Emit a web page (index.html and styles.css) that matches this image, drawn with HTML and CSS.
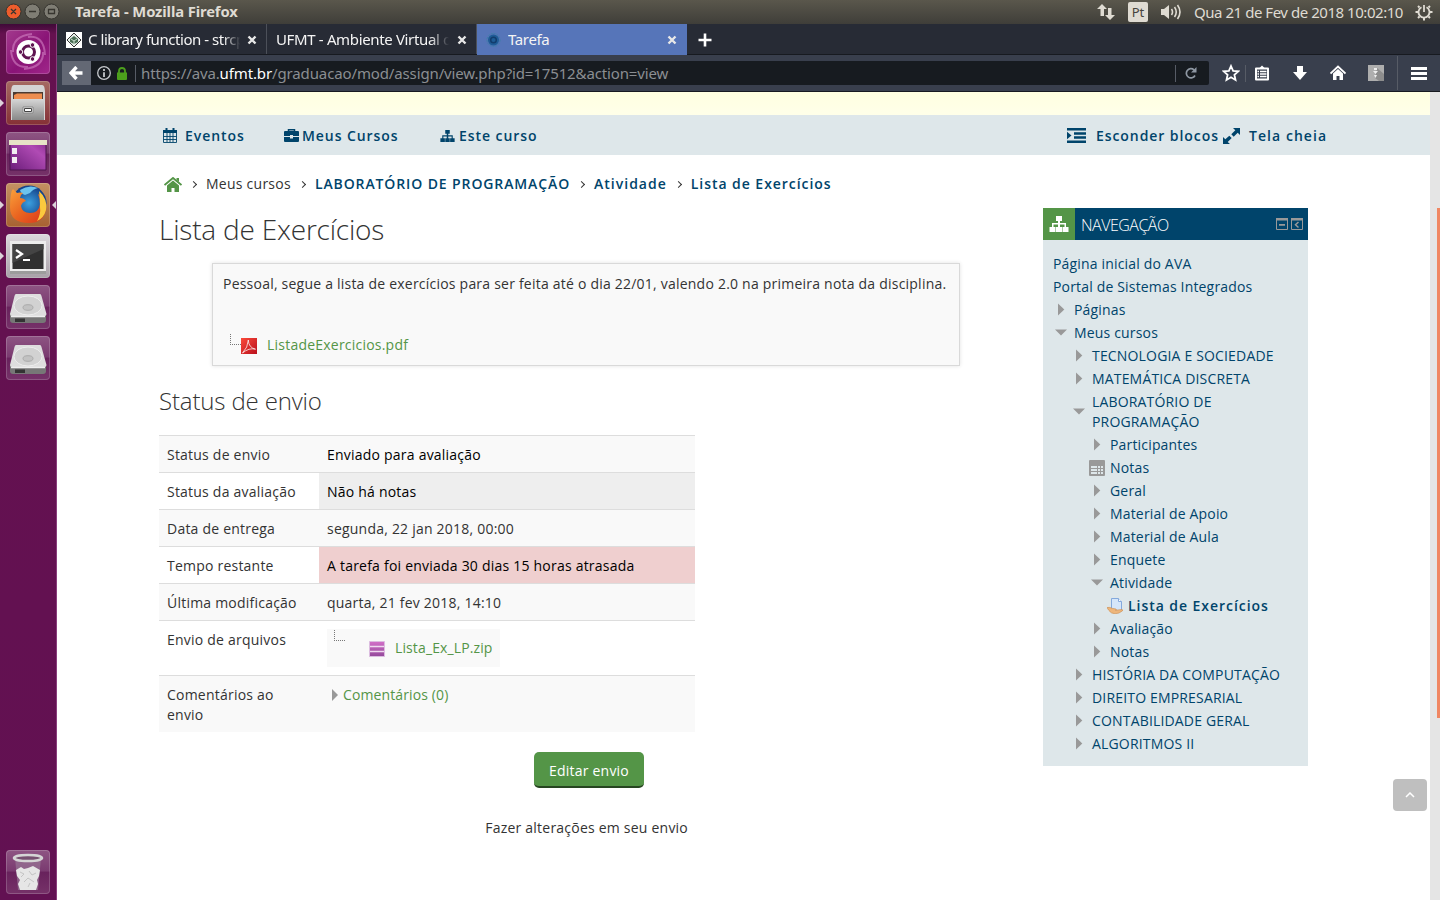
FILE: index.html
```html
<!DOCTYPE html>
<html lang="pt-BR">
<head>
<meta charset="utf-8">
<title>Tarefa</title>
<link rel="stylesheet" href="styles.css">
</head>
<body>
<svg class="defs" width="0" height="0" aria-hidden="true">
  <defs>
    <linearGradient id="gSteel" x1="0" y1="0" x2="0" y2="1"><stop offset="0" stop-color="#d6d6d6"/><stop offset="1" stop-color="#888"/></linearGradient>
    <linearGradient id="gPurple" x1="0" y1="1" x2="1" y2="0"><stop offset="0" stop-color="#6b1d7a"/><stop offset=".7" stop-color="#b04bb4"/><stop offset="1" stop-color="#8a2b90"/></linearGradient>
    <linearGradient id="gPdf" x1="0" y1="0" x2="1" y2="1"><stop offset="0" stop-color="#fb4a3a"/><stop offset="1" stop-color="#b90f1c"/></linearGradient>
    <linearGradient id="gZip" x1="0" y1="0" x2="0" y2="1"><stop offset="0" stop-color="#d36fc8"/><stop offset="1" stop-color="#94499b"/></linearGradient>
    <linearGradient id="gFox" x1="0" y1="0" x2="1" y2="1"><stop offset="0" stop-color="#f9a13b"/><stop offset=".5" stop-color="#ea6420"/><stop offset="1" stop-color="#d8361c"/></linearGradient>
    <radialGradient id="gGlobe"><stop offset="0" stop-color="#3aa0e0"/><stop offset="1" stop-color="#143f86"/></radialGradient>
    <symbol id="right" viewBox="0 0 16 16"><path d="M5 1.500l6.300 6L5 13.500z" fill="#999"/></symbol>
    <symbol id="down" viewBox="0 0 16 16"><path d="M2 4.500h12l-6 6z" fill="#999"/></symbol>
    <symbol id="sitemap" viewBox="0 0 20 16"><path d="M7 0h6v5h-2v2h6v4h2.500v5h-6v-5h2V8.500H11V11h2v5H7v-5h2V8.500H4.500V11h2v5h-6v-5H3V7h6V5H7z" fill="currentColor"/></symbol>
    <symbol id="disk" viewBox="0 0 44 44"><path d="M4 28h36v7q0 3-3 3H7q-3 0-3-3z" fill="#777"/><path d="M10 9h24q1 0 1.500 2L40.500 29q0 2-2 2H6q-2 0-2-2L8.500 11q.5-2 1.500-2z" fill="#dedede"/><ellipse cx="22" cy="20.500" rx="14" ry="9.500" fill="#d2d2d2" stroke="#ededed"/><ellipse cx="22" cy="22.500" rx="5" ry="2.800" fill="#c2c2c2" stroke="#aaa"/><path d="M5 31.500h34" stroke="#eee" stroke-width="1.500"/><path d="M9 33.500h10V37H9z" fill="#333"/></symbol>
    <symbol id="close" viewBox="0 0 10 10"><path d="M1.500 1.500l7 7M8.500 1.500l-7 7" stroke="currentColor" stroke-width="2.400"/></symbol>
  </defs>
</svg>

<header class="panel">
  <div class="wm">
    <svg width="60" height="24" viewBox="0 0 60 24"><g stroke="#35332e"><circle cx="13.500" cy="11.500" r="7.500" fill="#ee5d2c"/><circle cx="32.500" cy="11.500" r="7.500" fill="#7f7d74"/><circle cx="51.500" cy="11.500" r="7.500" fill="#7f7d74"/></g><g fill="none" stroke="#37352f" stroke-width="1.300"><path d="M11 9l5 5M16 9l-5 5M29 11.500h7M48.500 9.500h6v4h-6z"/></g></svg>
    <b class="wm-title">Tarefa - Mozilla Firefox</b>
  </div>
  <div class="tray">
    <svg class="t-net" width="18" height="18" viewBox="0 0 18 18"><path d="M0 6l5-5 5 5H7v7H3.500V6zM8 12h3V5h3.500v7H18l-5 5z" fill="#dfdbd2"/></svg>
    <span class="kbd">Pt</span>
    <svg class="t-vol" width="21" height="18" viewBox="0 0 21 18"><path d="M0 6h3l5-4v14l-5-4H0z" fill="#dfdbd2"/><path d="M10.500 6q2 3 0 6M13.500 4q3.500 5 0 10M16.500 2q5 7 0 14" fill="none" stroke="#dfdbd2" stroke-width="1.600"/></svg>
    <span class="clock">Qua 21 de Fev de 2018 10:02:10</span>
    <svg width="18" height="18" viewBox="0 0 18 18"><path d="M6.500 4.200a5.500 5.500 0 1 0 5 0M9 2v7" fill="none" stroke="#dfdbd2" stroke-width="1.800"/><path d="M3 3l1.500 1.500M13.500 4.500L15 3M.5 9H3M15 9h2.500M3 15l1.500-1.500M13.500 13.500L15 15M9 15v2.500" stroke="#dfdbd2" stroke-width="2"/></svg>
  </div>
</header>

<div class="desktop">
  <aside class="launcher">
    <div class="tile dash"><svg viewBox="0 0 44 44"><path d="M7 22Q6 6 26 4M22 7q16-2 17 18M37 22q1 15-19 17M22 37Q6 38 5 20" fill="none" stroke="#d98acb" stroke-opacity=".55" stroke-width="2"/><circle cx="22.500" cy="22" r="12" fill="#fff"/><circle cx="22.500" cy="22" r="6" fill="none" stroke="#5e1350" stroke-width="3"/><g fill="#5e1350" stroke="#fff"><circle cx="14.500" cy="22" r="2.300"/><circle cx="26.500" cy="15" r="2.300"/><circle cx="26.500" cy="29" r="2.300"/></g></svg></div>
    <div class="tile files run"><svg viewBox="0 0 44 44"><path d="M8 4h28q2 0 2.500 3l.5 3v29H5V10l.5-3Q6 4 8 4z" fill="#d4d4d4"/><path d="M7 11h30v8H7z" fill="#4b3a32"/><path d="M8 14l3-1.500h25V18H8z" fill="#ed8d4f"/><path d="M6 18h32v21H6z" fill="url(#gSteel)"/><path d="M17 26h10v6H17z" fill="#eee" stroke="#888"/><path d="M18.500 27.500h7v3h-7z" fill="#fff" stroke="#444"/></svg></div>
    <div class="tile desk"><svg viewBox="0 0 44 44"><path d="M4 9h36v29H4z" fill="url(#gPurple)" stroke="#4d124d"/><path d="M3 8h38v5H3z" fill="#e7e3c7"/><path d="M6 16h5v6H6zM6 25h5v6H6z" fill="#f3eef3"/></svg></div>
    <div class="tile fox run active"><svg viewBox="0 0 44 44"><circle cx="23" cy="20" r="17.500" fill="url(#gGlobe)"/><path d="M14 7q9-6 18-2-5 1-8 5l-5 2q-4-1-5-5z" fill="#6cc4ee"/><path d="M5 11q0-3 2-5l4 4q3-1 6 0-3 2-3 5 4 0 6 3-4 1-5 5 1 7 9 7 9 0 10-9 0-6-2-10 9 5 8 15-2 14-17 14Q4 40 4 24q0-8 1-13z" fill="url(#gFox)"/><path d="M33 8q9 8 7 19-2 8-9 11 4-7 3-14 0-9-1-16z" fill="#fbc93e"/></svg></div>
    <div class="tile term run"><svg viewBox="0 0 44 44"><path d="M4 7h36v33H4z" fill="#9c9c9c"/><path d="M4 7h36v30H4z" fill="#ececec"/><path d="M6.500 10h31v25h-31z" fill="#303030"/><path d="M6.500 10h31v5l-31 14z" fill="#444"/><path d="M10 16l6 4-6 4M17 26h7" fill="none" stroke="#fff" stroke-width="2.200"/></svg></div>
    <div class="tile"><svg><use href="#disk"/></svg></div>
    <div class="tile"><svg><use href="#disk"/></svg></div>
    <div class="tile trash"><svg viewBox="0 0 44 44"><path d="M9 8h26l-3 32H12z" fill="#9a7a98" fill-opacity=".65"/><path d="M10 20l5-3 3 2 4-1 5-2 7 4-1 6-2 4 1 4-2 6H14l-2-6 2-4-3-4z" fill="#e6e6e6"/><path d="M14 22l4 2-3 3M23 21l3 4 4-2M18 32l4-4 6 4M22 37l2-4" fill="none" stroke="#c4c4c4"/><ellipse cx="22" cy="8" rx="14" ry="3" fill="#76506f" stroke="#d5d5d5" stroke-width="2.500"/></svg></div>
  </aside>

  <div class="browser">
    <div class="tabs">
      <div class="tab t1">
        <svg width="16" height="16" viewBox="0 0 16 16"><path d="M0 0h16v16H0z" fill="#fff"/><path d="M8 1l7 7-7 7-7-7z" fill="#e7eee8" stroke="#333"/><path d="M8 4l4 3v3l-4 2-4-2V7z" fill="#4b6e55"/><path d="M5 7l3 2 3-2M8 9v3" fill="none" stroke="#cde0d2"/></svg>
        <span class="tt">C library function - strcpy</span><svg class="x"><use href="#close"/></svg>
      </div>
      <div class="tab t2"><span class="tt">UFMT - Ambiente Virtual de</span><svg class="x"><use href="#close"/></svg></div>
      <div class="tab t3">
        <svg width="16" height="16" viewBox="0 0 16 16"><circle cx="7.500" cy="8" r="5.500" fill="#1f5c96"/><circle cx="7.500" cy="8" r="6.500" fill="none" stroke="#3d7fa8" stroke-dasharray="2 1"/><circle cx="7.500" cy="8" r="2.800" fill="none" stroke="#123d6e" stroke-width="1.500"/></svg>
        <span class="tt">Tarefa</span><svg class="x"><use href="#close"/></svg>
      </div>
      <svg class="plus" width="14" height="14" viewBox="0 0 14 14"><path d="M7 .5v13M.5 7h13" stroke="#fff" stroke-width="2.600"/></svg>
    </div>
    <div class="toolbar">
      <div class="back"><svg width="14" height="14" viewBox="0 0 14 14"><path d="M7.500 1L2 7l5.500 6M2.500 7H13.500" fill="none" stroke="#fff" stroke-width="3.400"/></svg></div>
      <div class="url">
        <svg width="14" height="14" viewBox="0 0 14 14"><circle cx="7" cy="7" r="6.300" fill="none" stroke="#c5c8cc" stroke-width="1.300"/><path d="M7 3v2M7 6.200V11" stroke="#c5c8cc" stroke-width="1.800"/></svg>
        <svg class="lock" width="10" height="13" viewBox="0 0 10 13"><path d="M2 6V4q0-3 3-3t3 3v2" fill="none" stroke="#4c9f1c" stroke-width="1.800"/><path d="M0 5.500h10V12q0 1-1 1H1q-1 0-1-1z" fill="#4c9f1c"/></svg>
        <i class="vsep"></i>
        <span class="addr">https://ava.<em>ufmt.br</em>/graduacao/mod/assign/view.php?id=17512&amp;action=view</span>
        <i class="vsep end"></i>
        <svg class="reload" width="12" height="12" viewBox="0 0 12 12"><path d="M10 8.500A4.600 4.600 0 1 1 9 2.800" fill="none" stroke="#8f98a3" stroke-width="1.700"/><path d="M11.500 0v5.500H6z" fill="#8f98a3"/></svg>
      </div>
      <div class="tools">
        <svg width="18" height="18" viewBox="0 0 18 18"><path d="M9 2l2.100 4.800 5.200.5-3.900 3.500 1.100 5.100L9 13.200l-4.500 2.700 1.100-5.100-3.900-3.500 5.200-.5z" fill="none" stroke="#fff" stroke-width="1.800"/></svg>
        <i class="vsep"></i>
        <svg width="16" height="16" viewBox="0 0 16 16"><path d="M5 3.500L8 .5l3 3z" fill="#fff"/><path d="M2 3.500h12v11H2z" fill="none" stroke="#fff" stroke-width="2" stroke-linejoin="round"/><path d="M3.500 6.500H5M6 6.500h6.500M3.500 9H5M6 9h6.500M3.500 11.500H5M6 11.500h6.500" stroke="#fff" stroke-width="1.400"/></svg>
        <svg width="16" height="16" viewBox="0 0 16 16"><path d="M5 1h6v6h4l-7 8-7-8h4z" fill="#fff"/></svg>
        <svg width="16" height="16" viewBox="0 0 16 16"><path d="M.5 8.500L8 1.500l7.500 7" fill="none" stroke="#fff" stroke-width="1.800"/><path d="M3 8.500L8 4l5 4.500V15H9.500v-4h-3v4H3z" fill="#fff"/></svg>
        <svg width="16" height="16" viewBox="0 0 16 16"><path d="M0 0h16v16H0z" fill="#aeaeae"/><path d="M9 3l7 6v7h-5l-4-3z" fill="#8d8d8d"/><path d="M6 3h3v2H6zM5 6h5L7.500 9zM6 10h3l-1.500 3z" fill="#eee"/></svg>
        <i class="vsep tall"></i>
        <svg width="16" height="13" viewBox="0 0 16 13"><path d="M0 1.500h16M0 6.500h16M0 11.500h16" stroke="#fff" stroke-width="2.800"/></svg>
      </div>
    </div>

    <div class="view">
      <div class="page">
        <div class="notice"></div>
        <nav class="menu">
          <a class="m1"><svg width="14" height="15" viewBox="0 0 14 15"><path d="M.5 2.500h13v12H.5zM.5 8.500h13M.5 11.500h13M4 5v9M7 5v9M10 5v9" fill="none" stroke="currentColor" stroke-width=".9"/><path d="M0 2h14v3H0zM2.500 0h2v4h-2zM9.500 0h2v4h-2z" fill="currentColor"/></svg><span>Eventos</span></a>
          <a class="m2"><svg width="15" height="13" viewBox="0 0 15 13"><path d="M4.500 2.500V.8h6v1.700" fill="none" stroke="currentColor" stroke-width="1.500"/><path d="M1 2h13q1 0 1 1v4H9V6H6v1H0V3q0-1 1-1zM0 8h6v1.500h3V8h6v4q0 1-1 1H1q-1 0-1-1z" fill="currentColor"/></svg><span>Meus Cursos</span></a>
          <a class="m3"><svg width="15" height="12"><use href="#sitemap"/></svg><span>Este curso</span></a>
          <a class="m4"><svg width="19" height="15" viewBox="0 0 19 15"><path d="M0 1.300h19M7 5.500h12M7 9.500h12M0 13.700h19" stroke="currentColor" stroke-width="2.500"/><path d="M0 3.800l4.500 3.700L0 11.200z" fill="currentColor"/></svg><span>Esconder blocos</span></a>
          <a class="m5"><svg width="17" height="16" viewBox="0 0 17 16"><path d="M10 0h7v7l-2.300-2.300-4 4-2.400-2.400 4-4zM0 9l2.300 2.300 4-3.500L8.700 10l-4 4L7 16H0z" fill="currentColor"/></svg><span>Tela cheia</span></a>
        </nav>
        <div class="crumbs">
          <svg width="18" height="15" viewBox="0 0 18 15"><path d="M.5 8L9 1l8.500 7" fill="none" stroke="#549547" stroke-width="1.900"/><path d="M3 8.500l6-5 6 5V15h-4.500v-4h-3v4H3zM12.500 1H15v4l-2.500-2z" fill="#549547"/></svg>
          <i class="chev"></i><span>Meus cursos</span><i class="chev"></i><b class="b1">LABORATÓRIO DE PROGRAMAÇÃO</b><i class="chev"></i><b class="b2">Atividade</b><i class="chev"></i><b class="b3">Lista de Exercícios</b>
        </div>
        <div class="cols">
          <main>
            <h1>Lista de Exercícios</h1>
            <section class="intro">
              <p>Pessoal, segue a lista de exercícios para ser feita até o dia 22/01, valendo 2.0 na primeira nota da disciplina.</p>
              <div class="file"><i class="elbow"></i><svg width="16" height="16" viewBox="0 0 16 16"><path d="M0 0h16v16H0z" fill="url(#gPdf)"/><path d="M1.500 15Q7 9.500 7.300 2q.2 7.500 7.200 9.200Q8 9.500 1.500 15z" fill="none" stroke="#fff" stroke-opacity=".8" stroke-width=".9"/></svg><a>ListadeExercicios.pdf</a></div>
            </section>
            <h2>Status de envio</h2>
            <div class="table">
              <div class="row odd"><div>Status de envio</div><div class="black">Enviado para avaliação</div></div>
              <div class="row"><div>Status da avaliação</div><div class="black grey">Não há notas</div></div>
              <div class="row odd"><div>Data de entrega</div><div>segunda, 22 jan 2018, 00:00</div></div>
              <div class="row"><div>Tempo restante</div><div class="black late">A tarefa foi enviada 30 dias 15 horas atrasada</div></div>
              <div class="row odd"><div>Última modificação</div><div>quarta, 21 fev 2018, 14:10</div></div>
              <div class="row"><div>Envio de arquivos</div><div class="filecell"><div class="zip"><i class="elbow"></i><svg width="16" height="16" viewBox="0 0 16 16"><path d="M.5.500h15v15H.5z" fill="url(#gZip)" stroke="#dcbde0"/><path d="M1 5.500h14M1 10.500h14" stroke="#f0d9f0" stroke-width="1.400"/></svg><a>Lista_Ex_LP.zip</a></div></div></div>
              <div class="row odd"><div>Comentários ao<br>envio</div><div class="comments"><svg width="16" height="20" viewBox="0 -2 16 20"><path d="M5 2l6 6-6 6z" fill="#999"/></svg><a>Comentários (0)</a></div></div>
            </div>
            <div class="actions"><button>Editar envio</button><p>Fazer alterações em seu envio</p></div>
          </main>
          <aside class="block">
            <div class="bhead"><span class="bicon"><svg width="20" height="16"><use href="#sitemap"/></svg></span><h3>NAVEGAÇÃO</h3><svg width="27" height="12" viewBox="0 0 27 12"><path d="M.5 1h11v10.500H.5zM15.500 1h11v10.500h-11z" fill="none" stroke="#999"/><path d="M0 0h12v2.500H0zM15 0h12v2.500H15zM3 6h6v1.800H3z" fill="#999"/><path d="M22.500 4l-3 2.800 3 2.700" fill="none" stroke="#999" stroke-width="1.500"/></svg></div>
            <ul>
              <li>Página inicial do AVA</li><li>Portal de Sistemas Integrados</li>
              <li><svg><use href="#right"/></svg><span>Páginas</span></li>
              <li><svg><use href="#down"/></svg><span>Meus cursos</span></li>
              <li class="l2"><svg><use href="#right"/></svg><span>TECNOLOGIA E SOCIEDADE</span></li>
              <li class="l2"><svg><use href="#right"/></svg><span>MATEMÁTICA DISCRETA</span></li>
              <li class="l2"><svg><use href="#down"/></svg><span>LABORATÓRIO DE<br>PROGRAMAÇÃO</span></li>
              <li class="l3"><svg><use href="#right"/></svg><span>Participantes</span></li>
              <li class="l3"><svg viewBox="0 0 16 16"><rect width="16" height="16" rx="1" fill="#999"/><path d="M2 6h6v2H2zM9 6h2v2H9zM12 6h2v2h-2zM2 9h6v2H2zM9 9h2v2H9zM12 9h2v2h-2zM2 12h6v2H2zM9 12h2v2H9zM12 12h2v2h-2z" fill="#dee7ea"/></svg><span>Notas</span></li>
              <li class="l3"><svg><use href="#right"/></svg><span>Geral</span></li>
              <li class="l3"><svg><use href="#right"/></svg><span>Material de Apoio</span></li>
              <li class="l3"><svg><use href="#right"/></svg><span>Material de Aula</span></li>
              <li class="l3"><svg><use href="#right"/></svg><span>Enquete</span></li>
              <li class="l3"><svg><use href="#down"/></svg><span>Atividade</span></li>
              <li class="l4"><svg viewBox="0 0 16 16"><path d="M4.500.5h7l3 3v9h-10z" fill="#d5e6fa" stroke="#84a9dc"/><path d="M11.500.5v3h3" fill="#fff" stroke="#84a9dc"/><path d="M0 9.500q3-.5 5 .8l4 .7q1 .8-.5 1.200l6.500-.7q1.500.3.300 1.500Q12 15.800 8 15.800T1.500 12z" fill="#eeb67b" stroke="#c98d53" stroke-width=".6"/></svg><b class="b3">Lista de Exercícios</b></li>
              <li class="l3"><svg><use href="#right"/></svg><span>Avaliação</span></li>
              <li class="l3"><svg><use href="#right"/></svg><span>Notas</span></li>
              <li class="l2"><svg><use href="#right"/></svg><span>HISTÓRIA DA COMPUTAÇÃO</span></li>
              <li class="l2"><svg><use href="#right"/></svg><span>DIREITO EMPRESARIAL</span></li>
              <li class="l2"><svg><use href="#right"/></svg><span>CONTABILIDADE GERAL</span></li>
              <li class="l2"><svg><use href="#right"/></svg><span>ALGORITMOS II</span></li>
            </ul>
          </aside>
        </div>
        <a class="top"><svg width="10" height="6" viewBox="0 0 10 6"><path d="M1 5l4-4 4 4" fill="none" stroke="#fff" stroke-width="1.500"/></svg></a>
      </div>
      <div class="scroll"><div class="thumb"></div></div>
    </div>
  </div>
</div>
</body>
</html>
```
FILE: styles.css
```css
* { box-sizing: border-box; }
body { margin: 0; width: 1440px; height: 900px; overflow: hidden; display: flex; flex-direction: column; font: 14px/20px "Open Sans", sans-serif; color: #333; background: #fff; }
h1, h2, h3, p, ul { margin: 0; padding: 0; }
svg { flex: none; display: block; }
.defs { position: absolute; }

/* system panel */
.panel { height: 24px; flex: none; display: flex; justify-content: space-between; background: linear-gradient(#5a574c, #3f3e39); color: #dfdbd2; font-family: "Noto Sans", sans-serif; font-size: 15px; line-height: 23px; }
.wm { display: flex; }
.wm-title { margin-left: 15px; letter-spacing: -.12px; font-size: 14.800px; }
.tray { display: flex; align-items: center; padding-right: 7px; white-space: nowrap; }
.kbd { width: 20px; height: 20px; margin: 0 13px 0 13px; background: #dfdbd2; color: #45433d; border-radius: 2px; font-size: 13px; line-height: 20px; text-align: center; }
.clock { margin: 0 12px 0 12px; width: 209px; letter-spacing: -.46px; }

.desktop { flex: 1; display: flex; min-height: 0; }

/* launcher */
.launcher { width: 57px; flex: none; padding: 6px 0 6px 6px; display: flex; flex-direction: column; gap: 7px; background: linear-gradient(#3f0a38, #65114f 10px, #621152); border-right: 1px solid #8a3d7c; }
.tile { position: relative; width: 44px; height: 44px; flex: none; border-radius: 4px; background: linear-gradient(#8e5583, #7a3a70 48%, #68225c 50%, #763269); box-shadow: inset 0 0 0 1px rgba(255,255,255,.18); }
.tile svg { width: 44px; height: 44px; }
.dash { background: linear-gradient(135deg, #a33a8d, #8a1477 55%, #a1268b); }
.files { background: linear-gradient(#a56a62, #853036); }
.fox { background: linear-gradient(#c49163, #a76231); }
.term { background: linear-gradient(#dcd8dc, #a8a1a8); }
.run::before { content: ""; position: absolute; left: -6px; top: 18px; border: 4px solid transparent; border-left-color: #dcd3da; border-right: 0; }
.active::after { content: ""; position: absolute; right: -6px; top: 18px; border: 4px solid transparent; border-right-color: #dcd3da; border-left: 0; }
.trash { margin-top: auto; }

/* browser */
.browser { flex: 1; display: flex; flex-direction: column; min-width: 0; }
.tabs { height: 31px; flex: none; display: flex; align-items: center; background: #272b35; border-bottom: 1px solid #171a20; color: #f4f4f4; font-family: "Noto Sans", sans-serif; font-size: 15px; }
.tab { height: 30px; display: flex; align-items: center; padding: 2px 9px 0; border-right: 1px solid #4c5059; }
.tt { flex: 1; overflow: hidden; white-space: nowrap; letter-spacing: -.35px; line-height: 22px; padding-bottom: 2px; }
.t1 .tt { letter-spacing: -.45px; }
.t1 .tt, .t2 .tt { -webkit-mask-image: linear-gradient(90deg, #000 88%, transparent 99%); mask-image: linear-gradient(90deg, #000 88%, transparent 99%); }
.t1 { width: 210px; } .t1 .tt { margin: 0 5px 0 6px; }
.t2 { width: 210px; } .t2 .tt { margin-right: 6px; }
.t3 { width: 210px; height: 31px; background: #5675b9; border: 0; padding-right: 10px; } .t3 .tt { margin-left: 6px; }
.x { width: 10px; height: 10px; color: #e8e8e8; }
.plus { margin-left: 11px; margin-top: 1px; }
.toolbar { height: 37px; flex: none; display: flex; align-items: center; padding-left: 5px; background: #393f4d; border-bottom: 1px solid #171a20; }
.back { width: 29px; height: 24px; padding-right: 1px; background: #636874; display: flex; align-items: center; justify-content: center; }
.url { width: 1118px; height: 24px; background: #171b20; border-radius: 0 2px 2px 0; display: flex; align-items: center; padding: 0 12px 0 6px; color: #8b8e92; font-family: "Noto Sans", sans-serif; font-size: 15px; white-space: nowrap; }
.url em { font-style: normal; color: #fff; }
.lock { margin-left: 6px; }
.vsep { width: 1px; height: 17px; background: #575c66; flex: none; }
.url .vsep { margin: 0 5px 0 8px; }
.addr { letter-spacing: -.13px; }
.url .vsep.end { margin: 0 9px 0 auto; }
.tools { display: flex; align-items: center; padding-left: 13px; }
.tools svg + svg { margin-left: 22px; }
.tools .vsep { margin: 0 8px 0 5px; }
.tools .vsep.tall { height: 34px; margin: 0 13px 0 13px; }

.view { flex: 1; display: flex; min-height: 0; }
.page { flex: 1; position: relative; }
.scroll { width: 10px; background: #e5e5e5; padding-top: 116px; }
.thumb { width: 3px; height: 510px; margin-left: 7px; background: #f08763; }
.notice { height: 23px; background: linear-gradient(#ffffe0, #ffffe9); }

/* course menu */
.menu { height: 40px; background: #dee7ea; color: #00446b; display: flex; align-items: center; padding: 1px 0 0 106px; font-weight: 600; letter-spacing: .93px; white-space: nowrap; }
.menu a { display: flex; align-items: center; }
.m1 { width: 121px; } .m1 span { margin-left: 8px; }
.m2 { width: 156px; } .m2 span { margin-left: 3px; }
.m3 span { margin-left: 4px; }
.m4 { margin-left: auto; width: 156px; } .m4 span { margin-left: 10px; }
.m5 { width: 207px; letter-spacing: 1.050px; } .m5 span { margin-left: 9px; }

.crumbs { display: flex; align-items: center; height: 20px; margin: 19px 0 0 107px; white-space: nowrap; letter-spacing: .25px; }
.crumbs b, li b { color: #00446b; font-weight: 600; }
.chev { width: 5px; height: 5px; margin: 0 10px 0 9px; border: solid #333; border-width: 1.300px 1.300px 0 0; transform: rotate(45deg); }
.b1 { letter-spacing: .89px; }
.b2 { letter-spacing: 1px; }
.b3 { letter-spacing: .95px; }

.cols { display: flex; justify-content: space-between; align-items: flex-start; padding: 14px 122px 0 102px; }
main { width: 801px; letter-spacing: .22px; }
h1 { font-size: 28px; line-height: 40px; font-weight: 300; padding: 1px 0; letter-spacing: -.2px; }
.intro { margin: 13px 0 0 53px; width: 748px; height: 103px; padding: 10px; background: #f9f9f9; border: 1px solid #d9d9d9; box-shadow: 0 0 4px rgba(0,0,0,.12); white-space: nowrap; }
.file { display: flex; align-items: center; margin-top: 41px; padding-left: 7px; }
.file svg { margin-top: 2px; }
.elbow { width: 11px; height: 11px; border: dotted #777; border-width: 0 0 1px 1px; }
.file .elbow { margin-top: -11px; }
.file a { margin-left: 10px; }
.file a, .zip a, .comments a { color: #549547; }
h2 { font-size: 24px; line-height: 40px; font-weight: 300; margin-top: 15px; letter-spacing: -.15px; }
.table { width: 536px; margin-top: 14px; }
.row { display: grid; grid-template-columns: 160px 1fr; border-top: 1px solid #ddd; }
.row > div { padding: 9px 8px 7px; }
.row > .filecell { padding: 8px; }
.odd { background: #f9f9f9; }
.row .black { color: #000; }
.row .grey { background: #eee; }
.row .late { background: #efcfcf; }
.zip { display: flex; align-items: flex-start; width: 173px; height: 38px; background: #f9f9f9; padding: 1px 0 0 7px; letter-spacing: .12px; }
.zip svg { margin: 11px 10px 0 24px; }
.zip a { margin-top: 8px; }
.comments { display: flex; letter-spacing: .12px; }
.actions { width: 536px; display: flex; flex-direction: column; align-items: center; padding: 20px 0 0 324px; white-space: nowrap; }
button { width: 110px; height: 36px; margin-left: 0; border: 0; border-bottom: 2px solid #274621; border-radius: 5px; background: #549547; color: #fff; font: inherit; letter-spacing: .22px; padding: 3px 0 0; }
.actions p { margin-top: 30px; align-self: flex-end; margin-right: 7px; }

/* navigation block */
.block { width: 265px; height: 558px; background: #dee7ea; color: #00446b; letter-spacing: .17px; }
.bhead { height: 32px; background: #00446b; display: flex; align-items: center; padding-right: 5px; }
.bicon { width: 32px; height: 32px; background: #549547; color: #fff; display: flex; align-items: center; justify-content: center; }
h3 { flex: 1; margin: 2px 0 0 6px; font-size: 16px; font-weight: 300; color: #fff; letter-spacing: -.5px; }
ul { list-style: none; padding: 14px 0 0 10px; }
li { display: flex; align-items: center; margin-bottom: 3px; white-space: nowrap; }
li svg { width: 16px; height: 16px; margin-right: 5px; }
.l2 { padding-left: 18px; } .l3 { padding-left: 36px; } .l4 { padding-left: 54px; }
.top { position: absolute; left: 1336px; top: 687px; width: 34px; height: 32px; border-radius: 4px; background: #bfbfbf; display: flex; align-items: center; justify-content: center; }
```
